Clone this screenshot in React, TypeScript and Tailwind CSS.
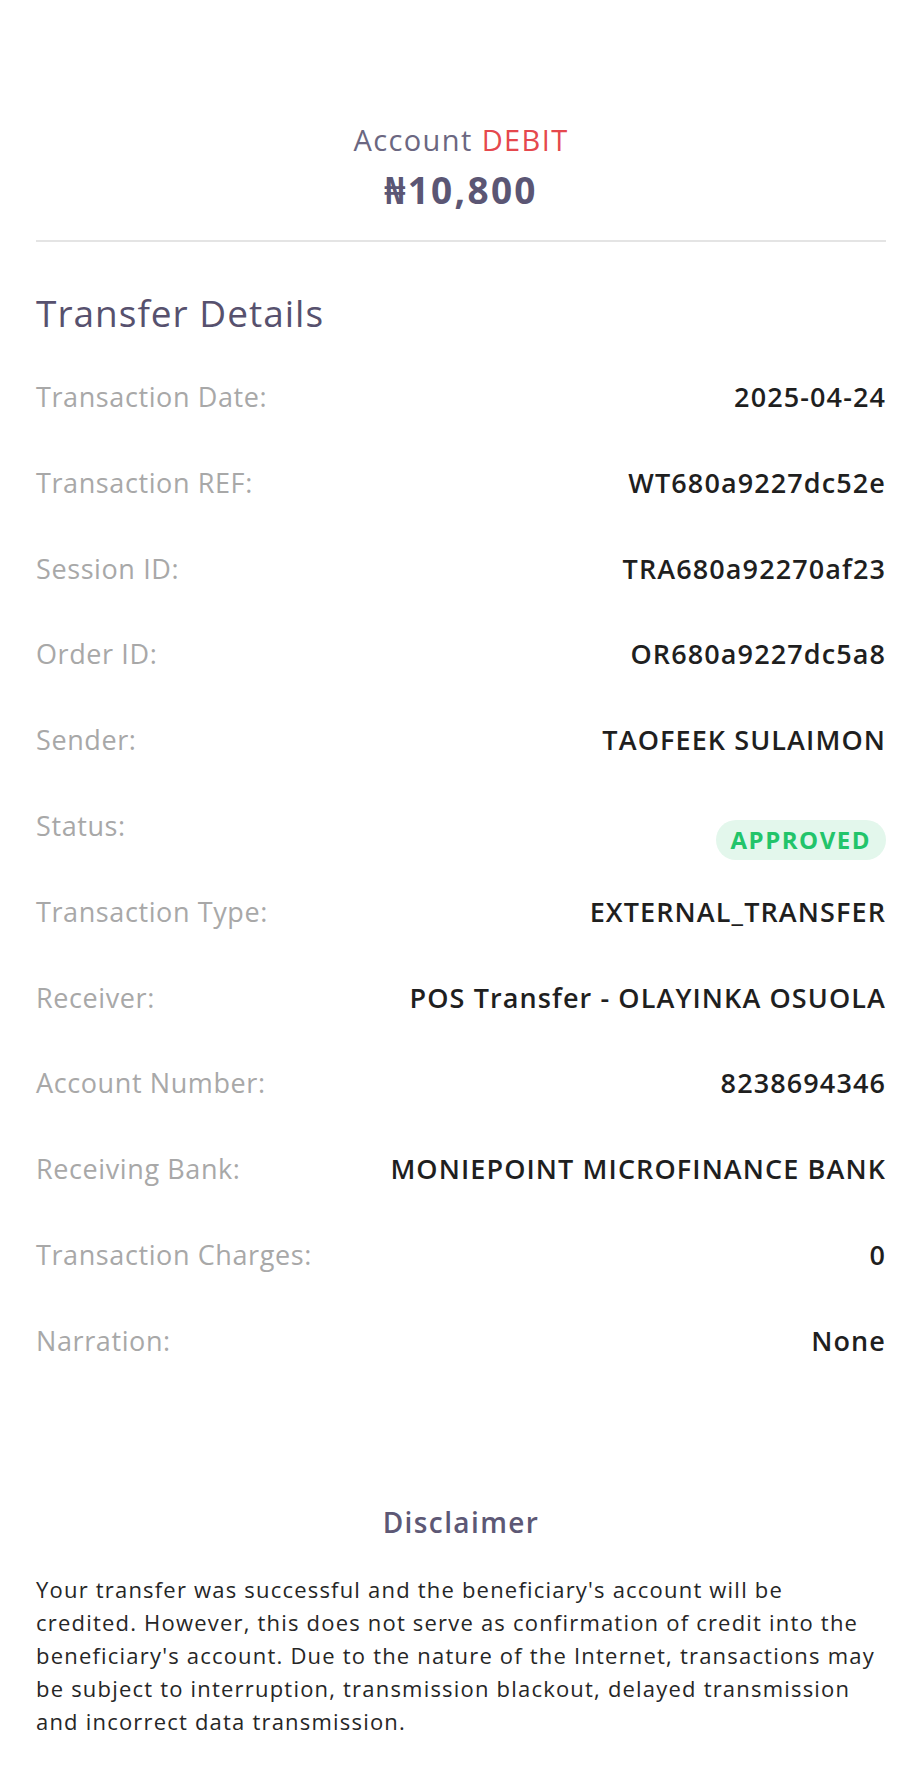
import React from 'react';

const rows: { label: string; value: string }[] = [
  { label: 'Transaction Date:', value: '2025-04-24' },
  { label: 'Transaction REF:', value: 'WT680a9227dc52e' },
  { label: 'Session ID:', value: 'TRA680a92270af23' },
  { label: 'Order ID:', value: 'OR680a9227dc5a8' },
  { label: 'Sender:', value: 'TAOFEEK SULAIMON' },
  { label: 'Status:', value: 'APPROVED' },
  { label: 'Transaction Type:', value: 'EXTERNAL_TRANSFER' },
  { label: 'Receiver:', value: 'POS Transfer - OLAYINKA OSUOLA' },
  { label: 'Account Number:', value: '8238694346' },
  { label: 'Receiving Bank:', value: 'MONIEPOINT MICROFINANCE BANK' },
  { label: 'Transaction Charges:', value: '0' },
  { label: 'Narration:', value: 'None' },
];

export default function App() {
  return (
    <div className="min-h-screen bg-white px-9 font-['Open_Sans','Noto_Sans',sans-serif]">
      {/* amount header */}
      <div className="pt-[122px] text-center">
        <p className="text-[29px] leading-[36px] tracking-[1.4px] text-[#6b6781]">
          Account <span className="text-[#e5484d]">DEBIT</span>
        </p>
        <p className="mt-[10px] text-[37px] font-bold leading-[44px] tracking-[2.3px] text-[#5b5674]">₦10,800</p>
      </div>
      <div className="mt-[28px] h-[2px] bg-[#e4e4e4]" />

      <h2 className="mt-[48px] text-[37px] font-medium leading-[46px] tracking-[1px] text-[#57516e]">
        Transfer Details
      </h2>

      <div className="mt-[43px]">
        {rows.map((row) => (
          <div key={row.label} className="flex h-[85.8px] items-start justify-between gap-6">
            <span className="text-[27px] leading-[36px] tracking-[0.6px] text-[#a8a8a8]">{row.label}</span>
            {row.label === 'Status:' ? (
              <span className="mt-[12px] rounded-full bg-[#e3f7ec] px-[15px] text-[24px] font-bold leading-[40px] tracking-[1.5px] text-[#22c46a]">
                {row.value}
              </span>
            ) : (
              <span className="text-right text-[27px] font-semibold leading-[36px] tracking-[1.1px] text-[#1f1f1f]">
                {row.value}
              </span>
            )}
          </div>
        ))}
      </div>

      {/* disclaimer */}
      <div className="mt-[95px] pb-16">
        <h3 className="text-center text-[28px] font-semibold leading-[36px] tracking-[1.4px] text-[#5d5875]">
          Disclaimer
        </h3>
        <p className="mt-[33px] text-[22px] leading-[33px] tracking-[1.2px] text-[#262626]">
          Your transfer was successful and the beneficiary's account will be
          <br />
          credited. However, this does not serve as confirmation of credit into the
          <br />
          beneficiary's account. Due to the nature of the Internet, transactions may
          <br />
          be subject to interruption, transmission blackout, delayed transmission
          <br />
          and incorrect data transmission.
        </p>
      </div>
    </div>
  );
}
